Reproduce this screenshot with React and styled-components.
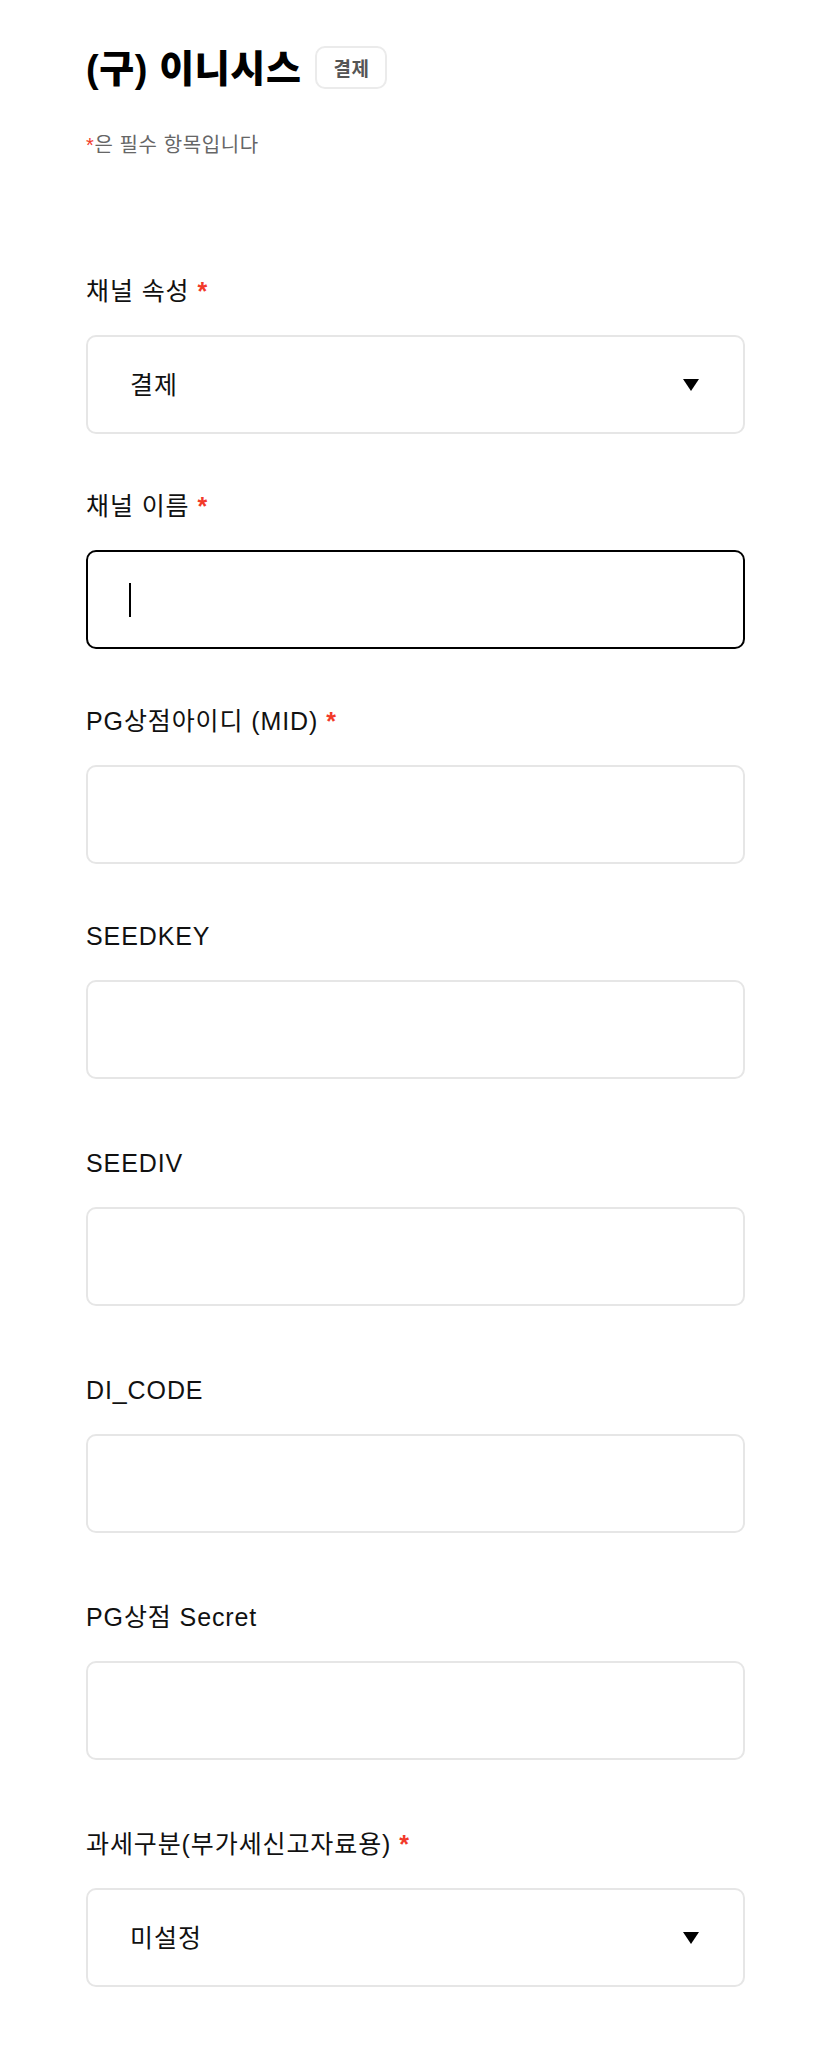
import React from "react";
import styled, { createGlobalStyle } from "styled-components";

const GlobalStyle = createGlobalStyle`
  html, body {
    margin: 0;
    padding: 0;
    background: #ffffff;
  }
  body {
    font-family: "Liberation Sans", "Noto Sans CJK KR", sans-serif;
    color: #111111;
  }
  *, *::before, *::after {
    box-sizing: border-box;
  }
`;

const Page = styled.main`
  width: 659px;
  margin-left: 86px;
  padding-top: 44px;
  padding-bottom: 60px;
`;

const Header = styled.header`
  display: flex;
  flex-direction: column;
`;

const TitleRow = styled.div`
  display: flex;
  align-items: center;
  gap: 14px;
  height: 50px;
`;

const Title = styled.h1`
  margin: 0;
  font-size: 38px;
  line-height: 50px;
  font-weight: 800;
  letter-spacing: 0.6px;
  color: #000000;
`;

const Badge = styled.span`
  display: inline-flex;
  align-items: center;
  justify-content: center;
  height: 43px;
  padding: 0 16px;
  border: 2px solid #ebebeb;
  border-radius: 10px;
  font-size: 19px;
  font-weight: 700;
  letter-spacing: 0.5px;
  color: #555555;
  margin-top: -3px;
`;

const Notice = styled.p`
  margin: 37px 0 0;
  font-size: 20px;
  line-height: 28px;
  letter-spacing: 0.6px;
  color: #666666;
`;

const Star = styled.span`
  color: #f23a2a;
  font-weight: ${(p) => (p.$bold ? 700 : 400)};
  margin-left: ${(p) => p.$offset || 0}px;
`;

const Form = styled.form`
  display: flex;
  flex-direction: column;
  margin-top: 115px;
`;

const Field = styled.div`
  display: flex;
  flex-direction: column;
  margin-bottom: ${(p) => (p.$last ? 0 : p.$loose ? 67 : 55)}px;
`;

const Label = styled.label`
  display: block;
  font-size: 25px;
  line-height: 34px;
  letter-spacing: 0.9px;
  color: #111111;
  margin-bottom: 27px;
`;

const boxStyles = `
  width: 100%;
  height: 99px;
  border: 2px solid #e6e6e6;
  border-radius: 10px;
  background: #ffffff;
  font-family: "Liberation Sans", "Noto Sans CJK KR", sans-serif;
  font-size: 25px;
  letter-spacing: 1px;
  color: #111111;
  outline: none;
`;

const SelectButton = styled.button`
  ${boxStyles}
  display: flex;
  align-items: center;
  justify-content: space-between;
  padding: 0 44px 0 42px;
  cursor: pointer;
  text-align: left;
`;

const SelectValue = styled.span`
  line-height: 34px;
`;

const InputWrap = styled.div`
  position: relative;
`;

const TextInput = styled.input`
  ${boxStyles}
  display: block;
  padding: 0 42px;
  border-color: ${(p) => (p.$focused ? "#000000" : "#e6e6e6")};
  caret-color: transparent;
`;

const Caret = styled.span`
  position: absolute;
  left: 43px;
  top: 50%;
  width: 2px;
  height: 34px;
  margin-top: -17px;
  background: #000000;
`;

const Arrow = () => (
  <svg width="16" height="12" viewBox="0 0 16 12" aria-hidden="true">
    <path d="M0 0 H16 L8 12 Z" fill="#000000" />
  </svg>
);

const fields = [
  { id: "attr", label: "채널 속성", required: true, type: "select", value: "결제" },
  { id: "name", label: "채널 이름", required: true, type: "input", focused: true },
  { id: "mid", label: "PG상점아이디 (MID)", required: true, type: "input" },
  { id: "seedkey", label: "SEEDKEY", type: "input", loose: true },
  { id: "seediv", label: "SEEDIV", type: "input", loose: true },
  { id: "dicode", label: "DI_CODE", type: "input", loose: true },
  { id: "secret", label: "PG상점 Secret", type: "input", loose: true },
  { id: "tax", label: "과세구분(부가세신고자료용)", required: true, type: "select", value: "미설정" },
];

export default function App() {
  return (
    <>
      <GlobalStyle />
      <Page>
        <Header>
          <TitleRow>
            <Title>(구) 이니시스</Title>
            <Badge>결제</Badge>
          </TitleRow>
          <Notice>
            <Star>*</Star>은 필수 항목입니다
          </Notice>
        </Header>
        <Form onSubmit={(e) => e.preventDefault()}>
          {fields.map((f, i) => (
            <Field key={f.id} $loose={f.loose} $last={i === fields.length - 1}>
              <Label htmlFor={f.id}>
                {f.label}
                {f.required && (
                  <Star $bold $offset={8}>
                    *
                  </Star>
                )}
              </Label>
              {f.type === "select" ? (
                <SelectButton id={f.id} type="button">
                  <SelectValue>{f.value}</SelectValue>
                  <Arrow />
                </SelectButton>
              ) : (
                <InputWrap>
                  <TextInput id={f.id} type="text" $focused={f.focused} />
                  {f.focused && <Caret />}
                </InputWrap>
              )}
            </Field>
          ))}
        </Form>
      </Page>
    </>
  );
}
